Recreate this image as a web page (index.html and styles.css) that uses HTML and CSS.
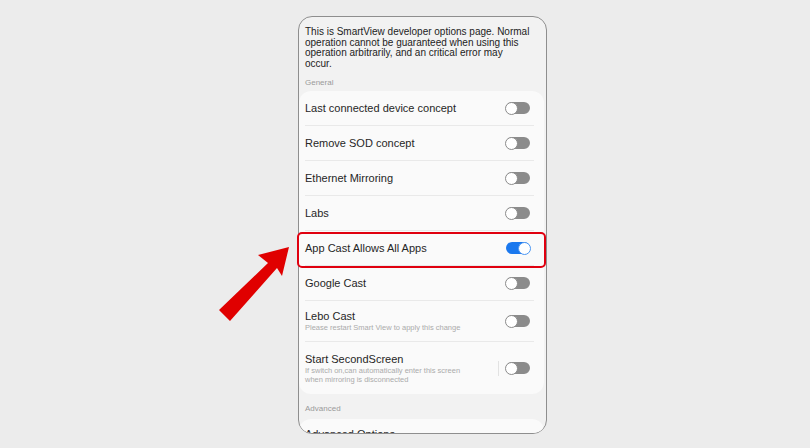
FILE: index.html
```html
<!doctype html>
<html lang="en">
	<head>
		<meta charset="utf-8">
		<link rel="stylesheet" href="styles.css">
		<title>SmartView developer options</title>
	</head>
	<body>
		<div class="phone">
			<p class="intro">This is SmartView developer options page. Normal operation cannot be guaranteed when using this operation arbitrarily, and an critical error may occur.</p>
			<div class="group-title">General</div>
			<div class="card">
				<div class="row"><span class="label">Last connected device concept</span><span class="switch"></span></div>
				<div class="row"><span class="label">Remove SOD concept</span><span class="switch"></span></div>
				<div class="row"><span class="label">Ethernet Mirroring</span><span class="switch"></span></div>
				<div class="row"><span class="label">Labs</span><span class="switch"></span></div>
				<div class="row"><span class="label">App Cast Allows All Apps</span><span class="switch on"></span></div>
				<div class="row"><span class="label">Google Cast</span><span class="switch"></span></div>
				<div class="row row-sub">
					<div class="text">
						<div class="label">Lebo Cast</div>
						<div class="sub">Please restart Smart View to apply this change</div>
					</div>
					<span class="switch"></span>
				</div>
				<div class="row row-tall">
					<div class="text">
						<div class="label">Start SecondScreen</div>
						<div class="sub">If switch on,can automatically enter this screen when mirroring is disconnected</div>
					</div>
					<span class="sep"></span>
					<span class="switch"></span>
				</div>
			</div>
			<div class="group-title group-adv">Advanced</div>
			<div class="card">
				<div class="row row-short"><span class="label">Advanced Options</span></div>
			</div>
		</div>

		<!-- annotation over the screenshot -->
		<div class="highlight"></div>
		<svg class="arrow" width="810" height="448" viewBox="0 0 810 448">
			<polygon points="219,310 268,263 258,255 289,247 282,276 277,268 230,321" fill="#e00000"/>
		</svg>
	</body>
</html>
```

FILE: styles.css
```css
body {
	background: #ececec;
	font-family: 'Liberation Sans', Arial, sans-serif;
	margin: 0;
	padding: 16px 0 0 298px;
	height: 448px;
	box-sizing: border-box;
	overflow: hidden;
}

.phone {
	background: #f2f2f2;
	border: 1px solid #8e8e8e;
	border-radius: 14px;
	box-sizing: border-box;
	height: 418px;
	overflow: hidden;
	width: 249px;
}

.intro {
	color: #222;
	font-size: 10px;
	line-height: 10.5px;
	margin: 0;
	padding: 10px 15px 0 6px;
}

.group-title {
	color: #9a9a9a;
	font-size: 8px;
	line-height: 10px;
	padding: 9px 0 3px 6px;
}

.group-adv {
	padding: 10px 0 5px 6px;
}

.card {
	background: #fafafa;
	border-radius: 12px;
	margin-right: 2px;
}

.row {
	align-items: center;
	border-bottom: 1px solid #e9e9e9;
	box-sizing: border-box;
	display: flex;
	height: 35px;
	margin: 0 10px 0 6px;
}

.row:last-child {
	border-bottom: none;
}

.row-sub {
	height: 41px;
}

.row-tall {
	height: 52px;
}

.row-short {
	height: 30px;
}

.label {
	color: #262626;
	flex: 1;
	font-size: 11px;
}

.text {
	flex: 1;
}

.text .label {
	line-height: 13px;
}

.sub {
	color: #ababab;
	font-size: 7.5px;
	line-height: 9px;
	padding-right: 18px;
}

.sep {
	background: #e2e2e2;
	height: 15px;
	margin-right: 7px;
	width: 1px;
}

.switch {
	background: #8b8b8b;
	border-radius: 7px;
	height: 12px;
	margin-right: 4px;
	position: relative;
	width: 24px;
}

.switch:after {
	background: #fff;
	border: 1px solid #8b8b8b;
	border-radius: 50%;
	box-sizing: border-box;
	content: "";
	height: 13px;
	left: -1px;
	position: absolute;
	top: -0.5px;
	width: 13px;
}

.switch.on {
	background: #1a78ee;
}

.switch.on:after {
	border-color: #4a95f2;
	left: auto;
	right: -1px;
}

.highlight {
	border: 2px solid #e0000f;
	border-radius: 5px;
	height: 32px;
	left: 297px;
	position: absolute;
	top: 232px;
	width: 245px;
}

.arrow {
	left: 0;
	position: absolute;
	top: 0;
}
```
